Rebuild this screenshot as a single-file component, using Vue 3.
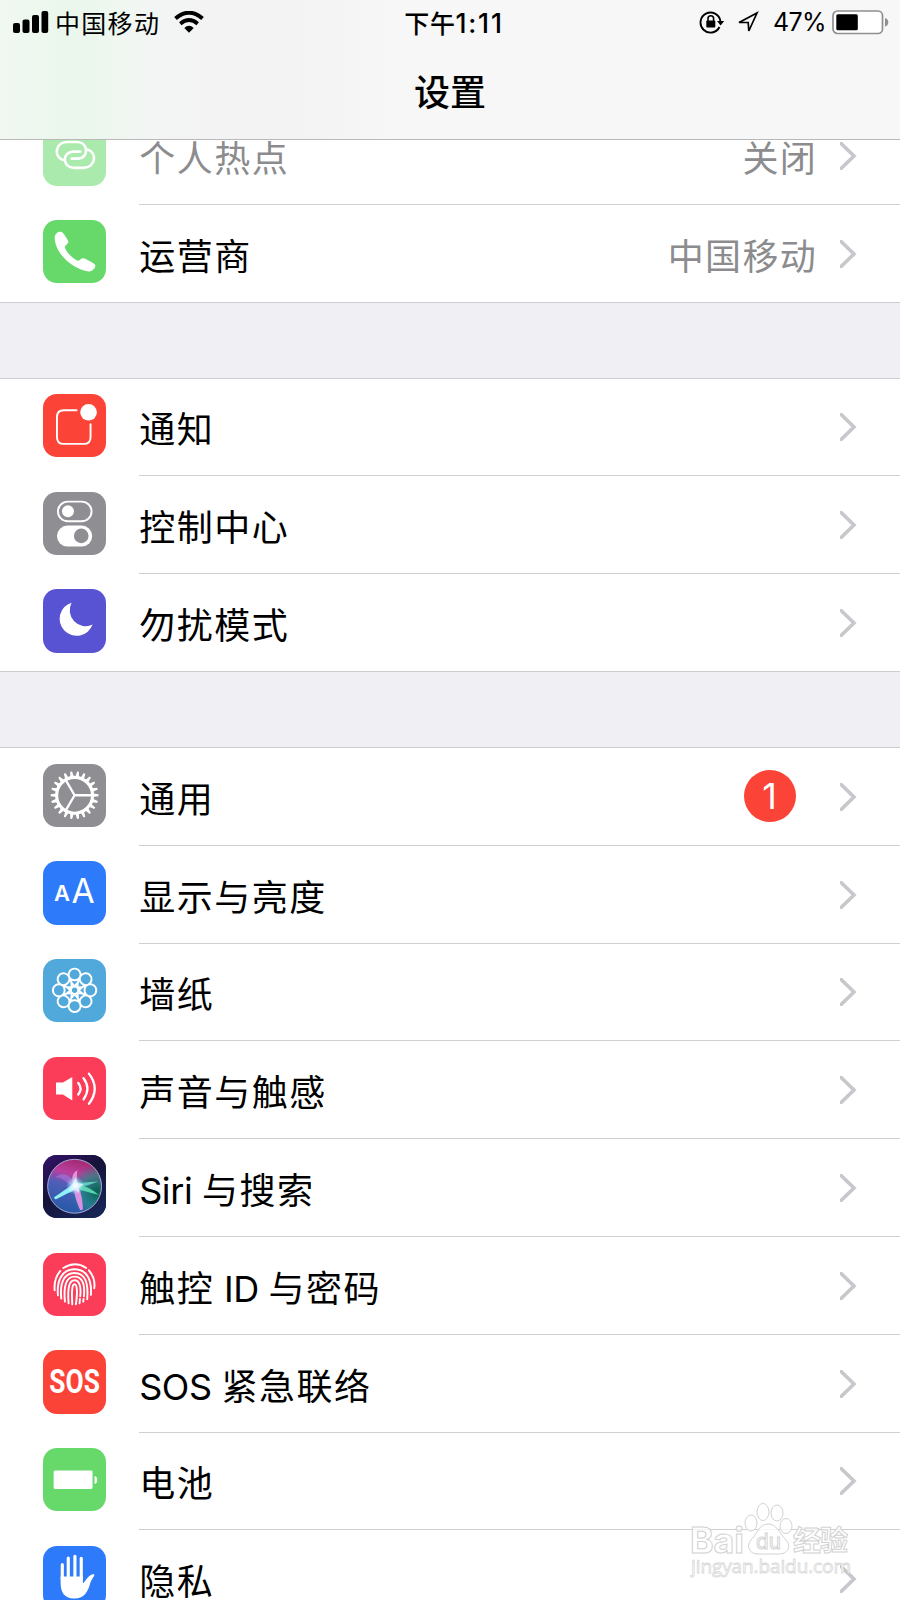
<template>
  <div class="phone">
    <header class="header">
      <div class="status">
        <div class="status-left">
          <svg class="signal" viewBox="0 0 36 24">
            <rect x="0" y="13" width="7" height="10" rx="2" />
            <rect x="9.5" y="9.5" width="7" height="13.5" rx="2" />
            <rect x="19" y="5" width="7" height="18" rx="2" />
            <rect x="28.5" y="1" width="6.7" height="22" rx="2" />
          </svg>
          <span class="carrier">中国移动</span>
          <svg class="wifi" viewBox="0 0 30 22">
            <path d="M1.5 7.5 Q15 -4 28.5 7.5" fill="none" stroke="#000" stroke-width="4" />
            <path d="M6.3 12.7 Q15 5.4 23.7 12.7" fill="none" stroke="#000" stroke-width="3.8" />
            <path d="M10.3 17 Q15 12.6 19.7 17 L15 21.8 Z" />
          </svg>
        </div>
        <div class="time">下午<span class="digits">1:11</span></div>
        <div class="status-right">
          <svg class="lock" viewBox="0 0 26 24">
            <path d="M20.5 17 A10 10 0 1 1 21.4 11" fill="none" stroke="#000" stroke-width="1.9" />
            <path d="M18 11 H25.2 L21.6 15.6 Z" />
            <rect x="7.3" y="10.5" width="9" height="7" rx="1" />
            <path d="M9 11 V8.5 A2.8 2.8 0 0 1 14.6 8.5 V11" fill="none" stroke="#000" stroke-width="1.6" />
          </svg>
          <svg class="arrow" viewBox="0 0 22 22">
            <path d="M2 11.5 L20 2 L11.8 20 L11.2 11.5 Z" fill="none" stroke="#000" stroke-width="1.7" />
          </svg>
          <span class="percent">47%</span>
          <svg class="battery" viewBox="0 0 57 25">
            <rect x="1" y="1" width="49.5" height="22.5" rx="4.5" fill="#fff" stroke="#8f8f8f" stroke-width="1.7" />
            <rect x="4.3" y="4.3" width="21.5" height="16" rx="1.5" />
            <path d="M53 8 Q56.3 9 56.3 12.3 Q56.3 15.6 53 16.6 Z" fill="#8f8f8f" />
          </svg>
        </div>
      </div>
      <h1 class="title">设置</h1>
    </header>

    <main class="list">
      <section v-for="(group, g) in groups" :key="g" class="group">
        <div v-for="item in group" :key="item.icon" class="row">
          <svg class="icon" :class="[item.icon, { faded: item.disabled }]" viewBox="0 0 190 190">
            <g v-if="item.icon === 'hotspot'" class="line w8">
              <path d="M60 111 C30 100 38 58 72 57 H103 C138 59 137 105 107 107 H86" />
              <path d="M133 80 C165 90 158 133 122 135 H92 C58 133 56 88 90 86 H112" />
            </g>
            <path v-else-if="item.icon === 'carrier-icon'" class="fill"
              d="M35 52 C36 40 47 34 56 36 C60 36 75 60 76 64 C78 72 64 76 66 84 C72 99 89 114 102 122 C111 125 112 113 122 115 C128 116 155 131 157 135 C160 142 148 155 137 155 C92 148 36 104 35 52 Z" />
            <g v-else-if="item.icon === 'notice'">
              <path class="line w6" d="M101 49 H62 Q42 49 42 70 V129 Q42 150 62 150 H123 Q143 150 143 129 V91" />
              <circle class="fill" cx="137" cy="55" r="25" />
            </g>
            <g v-else-if="item.icon === 'control'">
              <rect class="line w6" x="45" y="29" width="101" height="59" rx="29.5" />
              <circle class="fill" cx="75" cy="58" r="18" />
              <rect class="fill" x="42" y="101" width="106" height="63" rx="31.5" />
              <circle cx="115" cy="132" r="22" fill="#8e8e93" />
            </g>
            <path v-else-if="item.icon === 'moon'" class="fill"
              d="M86 41 A51 51 0 1 0 149 107 A48 48 0 0 1 86 41 Z" />
            <g v-else-if="item.icon === 'gear'">
              <path class="fill" :d="gearTeeth" />
              <circle class="line w9" cx="95" cy="94" r="54" />
              <path class="line w7" d="M95 94 H148 M95 94 L68 48 M95 94 L68 140" />
            </g>
            <g v-else-if="item.icon === 'display'" class="fill letters">
              <text x="33" y="121" font-size="66" font-weight="600">A</text>
              <text x="86" y="127" font-size="101" font-weight="400">A</text>
            </g>
            <g v-else-if="item.icon === 'wallpaper'" class="line w6">
              <path :d="petals" />
              <circle cx="95" cy="94" r="11" />
            </g>
            <g v-else-if="item.icon === 'sound'">
              <path class="fill" d="M39 77 H60 L88 60 V131 L60 113 H39 Z" />
              <path class="line w7" d="M106 78 Q120 95 106 113 M122 64 Q145 95 122 127 M138 50 Q173 95 138 141" />
            </g>
            <g v-else-if="item.icon === 'siri'">
              <defs>
                <linearGradient id="siriBack" x1="0" y1="0" x2="0.7" y2="1">
                  <stop offset="0" stop-color="#36106b" />
                  <stop offset="0.5" stop-color="#151338" />
                  <stop offset="1" stop-color="#172555" />
                </linearGradient>
                <linearGradient id="siriOrb" x1="0.6" y1="0" x2="0.35" y2="1">
                  <stop offset="0" stop-color="#a0286e" />
                  <stop offset="0.28" stop-color="#bb3f9f" />
                  <stop offset="0.5" stop-color="#4f5fb8" />
                  <stop offset="1" stop-color="#2459a8" />
                </linearGradient>
                <radialGradient id="siriTeal" cx="0.92" cy="0.6" r="0.5">
                  <stop offset="0" stop-color="#075f4d" />
                  <stop offset="0.6" stop-color="#1e8c82" stop-opacity="0.7" />
                  <stop offset="1" stop-color="#1e8c82" stop-opacity="0" />
                </radialGradient>
                <radialGradient id="siriGlow">
                  <stop offset="0" stop-color="#fff" />
                  <stop offset="0.35" stop-color="#d9f4ff" stop-opacity="0.75" />
                  <stop offset="1" stop-color="#8fd4ff" stop-opacity="0" />
                </radialGradient>
              </defs>
              <rect width="190" height="190" fill="url(#siriBack)" />
              <circle cx="95" cy="94" r="81" fill="url(#siriOrb)" />
              <circle cx="95" cy="94" r="81" fill="url(#siriTeal)" />
              <path d="M100 94 C82 52 58 52 36 66 C60 68 74 84 92 98 Z" fill="#a878dc" opacity="0.6" />
              <path d="M92 94 C84 70 88 54 104 46 C98 66 108 80 104 94 Z" fill="#f3b1e6" opacity="0.75" />
              <path d="M98 80 C78 98 50 116 32 128 L38 134 C62 120 84 110 106 102 Z" fill="#8df3f5" />
              <path d="M92 82 C120 86 144 80 166 80 C146 88 128 94 108 98 Z" fill="#6ee0d0" opacity="0.8" />
              <path d="M98 84 C126 92 150 104 168 120 C142 114 116 106 92 100 Z" fill="#5fe0b4" opacity="0.9" />
              <path d="M90 90 C94 122 104 148 112 166 L120 164 C120 138 114 112 106 90 Z" fill="#ee96ea" opacity="0.9" />
              <path d="M97 68 L103 84 L122 88 L107 99 L108 114 L96 103 L76 108 L88 92 Z" fill="#fff" opacity="0.85" />
              <circle cx="97" cy="92" r="28" fill="url(#siriGlow)" />
              <circle cx="95" cy="94" r="81" fill="none" stroke="#aaa8d4" stroke-width="3" />
            </g>
            <g v-else-if="item.icon === 'touch'" class="line w6">
              <path d="M61 45 Q97 23 130 45" />
              <path d="M35 112 C33 86 40 68 52 54 M138 52 C153 70 157 88 154 106" />
              <path d="M45 127 C41 84 56 49 95 49 C134 49 147 84 144 126" />
              <path d="M55 137 C50 94 61 60 95 60 C127 60 137 90 133 139" />
              <path d="M66 146 C61 99 70 71 95 71 C118 71 127 94 123 130 M122 138 L121 146" />
              <path d="M77 151 C73 105 79 82 95 82 C110 82 115 102 112 130 M111 138 L110 151" />
              <path d="M88 154 C86 115 87 94 95 94 C103 94 104 119 99 154" />
            </g>
            <text v-else-if="item.icon === 'sos'" class="fill sos-text" x="19" y="130" font-size="98"
              textLength="152" lengthAdjust="spacingAndGlyphs">SOS</text>
            <g v-else-if="item.icon === 'power'" class="fill">
              <rect x="32" y="68" width="117" height="55" rx="4" />
              <path d="M155 84 Q163 86 163 96 Q163 106 155 108 Z" />
            </g>
            <g v-else-if="item.icon === 'privacy'">
              <path class="line w9" d="M58 100 V56 M76 96 V36 M96 96 V31 M115 96 V37" />
              <path class="fill" d="M53 92 H120 V112 C128 107 136 84 154 85 C156 91 147 97 142 112 C136 134 126 158 94 158 C62 158 53 136 53 112 Z" />
            </g>
          </svg>
          <div class="cell">
            <span class="label" :class="{ muted: item.disabled }">
              <span v-for="(part, p) in item.label" :key="p" :class="{ latin: /[A-Z]/.test(part) }">{{ part }}</span>
            </span>
            <span v-if="item.value" class="value">{{ item.value }}</span>
            <span v-if="item.badge" class="badge">{{ item.badge }}</span>
            <svg class="chevron" viewBox="0 0 17 28">
              <path d="M-1 -0.5 L14 14 L-1 28.5" fill="none" stroke="#c7c7cc" stroke-width="3.6" />
            </svg>
          </div>
        </div>
      </section>
    </main>

    <svg class="watermark" viewBox="0 0 170 84">
      <g class="outline">
        <ellipse cx="61" cy="25" rx="6" ry="8" />
        <ellipse cx="73" cy="14" rx="6" ry="8.5" />
        <ellipse cx="87" cy="15" rx="6" ry="8" />
        <ellipse cx="96" cy="28" rx="6" ry="7.5" />
        <path d="M78 26 C87 26 89 35 96 42 C102 49 97 56 89 56 H68 C59 56 56 48 61 42 C67 36 69 26 78 26 Z" />
        <text x="0" y="55" font-size="35" font-weight="700" textLength="54" lengthAdjust="spacingAndGlyphs">Bai</text>
        <text x="66" y="51" font-size="22" textLength="25" lengthAdjust="spacingAndGlyphs">du</text>
        <text x="103" y="53" font-size="28" font-weight="700" textLength="55">经验</text>
      </g>
      <text class="site" x="1" y="75" font-size="19" textLength="160">jingyan.baidu.com</text>
    </svg>
  </div>
</template>

<script setup>
const groups = [
  [
    { icon: 'hotspot', label: ['个人热点'], value: '关闭', disabled: true },
    { icon: 'carrier-icon', label: ['运营商'], value: '中国移动' }
  ],
  [
    { icon: 'notice', label: ['通知'] },
    { icon: 'control', label: ['控制中心'] },
    { icon: 'moon', label: ['勿扰模式'] }
  ],
  [
    { icon: 'gear', label: ['通用'], badge: 1 },
    { icon: 'display', label: ['显示与亮度'] },
    { icon: 'wallpaper', label: ['墙纸'] },
    { icon: 'sound', label: ['声音与触感'] },
    { icon: 'siri', label: ['Siri ', '与搜索'] },
    { icon: 'touch', label: ['触控', ' ID ', '与密码'] },
    { icon: 'sos', label: ['SOS ', '紧急联络'] },
    { icon: 'power', label: ['电池'] },
    { icon: 'privacy', label: ['隐私'] }
  ]
]

// point on a circle around the icon centre, angle in degrees
function pt(r, deg) {
  const a = (deg * Math.PI) / 180
  return `${(95 + r * Math.cos(a)).toFixed(1)} ${(94 + r * Math.sin(a)).toFixed(1)}`
}

const gearTeeth = Array.from({ length: 22 }, (_, i) => {
  const a = (i * 360) / 22
  return `M${pt(56, a - 5.5)} L${pt(72, a - 2.2)} L${pt(72, a + 2.2)} L${pt(56, a + 5.5)} Z`
}).join(' ')

const petals = Array.from({ length: 8 }, (_, i) => {
  const a = i * 45
  return `M${pt(26, a - 22.5)} L${pt(44, a - 22.5)} A18 18 0 1 1 ${pt(44, a + 22.5)} ` +
    `A18 18 0 0 1 ${pt(30, a)} A18 18 0 0 1 ${pt(44, a - 22.5)} ` +
    `M${pt(26, a - 22.5)} L${pt(12, a)} L${pt(26, a + 22.5)}`
}).join(' ')
</script>

<style>
body {
  background: #efeff4;
}
</style>

<style scoped>
.phone {
  position: relative;
  width: 900px;
  height: 1600px;
  overflow: hidden;
  background: #efeff4;
  color: #000;
  font-family: Inter, "Noto Sans CJK SC", sans-serif;
}

/* Шапка */
.header {
  position: relative;
  z-index: 1;
  box-sizing: border-box;
  height: 140px;
  border-bottom: 1px solid #b9b9bb;
  background: linear-gradient(90deg, #f1f8f1 0, #ebf7ed 60px, #ebf7ed 95px, #f2f6f3 140px, #f3f3f4 200px, #f3f3f4 300px, #f7f7f7 390px);
}

.status {
  display: grid;
  grid-template-columns: 1fr auto 1fr;
  align-items: center;
  height: 44px;
  padding: 0 11px 0 13px;
}

.status-left,
.status-right {
  display: flex;
  align-items: center;
}

.status-right {
  justify-content: flex-end;
}

.signal {
  width: 36px;
  height: 24px;
}

.carrier {
  margin-left: 6px;
  font-size: 25px;
  letter-spacing: 1.3px;
}

.wifi {
  width: 30px;
  height: 22px;
  margin-left: 14px;
}

.time {
  padding-left: 6px;
  font-size: 25px;
  font-weight: 500;
  letter-spacing: 0.6px;
}

.digits {
  font-size: 26.5px;
  letter-spacing: 1.8px;
}

.lock {
  width: 26px;
  height: 24px;
}

.arrow {
  width: 22px;
  height: 22px;
  margin-left: 12px;
}

.percent {
  margin: 0 6px 0 14px;
  font-size: 25px;
  letter-spacing: -0.6px;
}

.battery {
  width: 57px;
  height: 25px;
}

.title {
  margin: 0;
  padding-top: 22px;
  text-align: center;
  font-size: 36px;
  font-weight: 500;
  line-height: 54px;
}

/* Список */
.list {
  display: flex;
  flex-direction: column;
  gap: 75px;
  margin-top: -34px;
}

.group {
  border-top: 1px solid #cdcdd1;
  background: #fff;
}

.row {
  display: flex;
  align-items: center;
  box-sizing: border-box;
  height: 97.8px;
  padding-left: 43.3px;
}

.icon {
  flex: none;
  width: 63.2px;
  height: 63.2px;
  margin-top: -3.2px;
  border-radius: 14px;
}

.cell {
  flex: 1;
  display: flex;
  align-items: center;
  box-sizing: border-box;
  height: 100%;
  margin-left: 32.7px;
  padding-top: 1px;
  padding-right: 43px;
  border-bottom: 1px solid #d0d0d3;
}

.row:last-child {
  border-bottom: 1px solid #cdcdd1;
}

.row:last-child .cell {
  border-bottom: none;
}

.label {
  flex: 1;
  font-size: 36px;
  letter-spacing: 1.5px;
  white-space: pre;
}

.latin {
  letter-spacing: -0.4px;
}

.value {
  margin-right: 23px;
  color: #8c8c8e;
  font-size: 36px;
  letter-spacing: 1.3px;
}

.muted {
  color: #8c8c8e;
}

.badge {
  width: 52px;
  height: 52px;
  margin-top: -1px;
  margin-right: 44.5px;
  border-radius: 50%;
  background: #fc4338;
  color: #fff;
  text-align: center;
  font-size: 36px;
  line-height: 53px;
}

.chevron {
  width: 17px;
  height: 28px;
}

/* Иконки */
.fill {
  fill: #fff;
}

.line {
  fill: none;
  stroke: #fff;
  stroke-linecap: round;
  stroke-linejoin: round;
}

.w6 {
  stroke-width: 5.8;
}

.w7 {
  stroke-width: 7;
}

.w8 {
  stroke-width: 8;
}

.w9 {
  stroke-width: 9.5;
}

.letters {
  font-family: Inter, sans-serif;
}

.sos-text {
  font-family: Roboto, sans-serif;
  font-weight: 700;
}

.faded {
  opacity: 0.55;
}

.hotspot,
.carrier-icon,
.power {
  background: #67d96b;
}

.notice,
.sos {
  background: #fc4338;
}

.control,
.gear {
  background: #8e8e93;
}

.moon {
  background: #5753d3;
}

.display,
.privacy {
  background: #2d7bfb;
}

.wallpaper {
  background: #51a9db;
}

.sound,
.touch {
  background: #fc3d5a;
}

.siri {
  background: #151338;
}

/* Водяной знак */
.watermark {
  position: absolute;
  left: 690px;
  top: 1498px;
  width: 170px;
  height: 84px;
}

.outline {
  fill: #fff;
  fill-opacity: 0.8;
  stroke: #d2d2d2;
  stroke-width: 1;
}

.site {
  fill: #fff;
  stroke: #d8d8d8;
  stroke-width: 0.8;
  font-family: "Open Sans", sans-serif;
}
</style>
